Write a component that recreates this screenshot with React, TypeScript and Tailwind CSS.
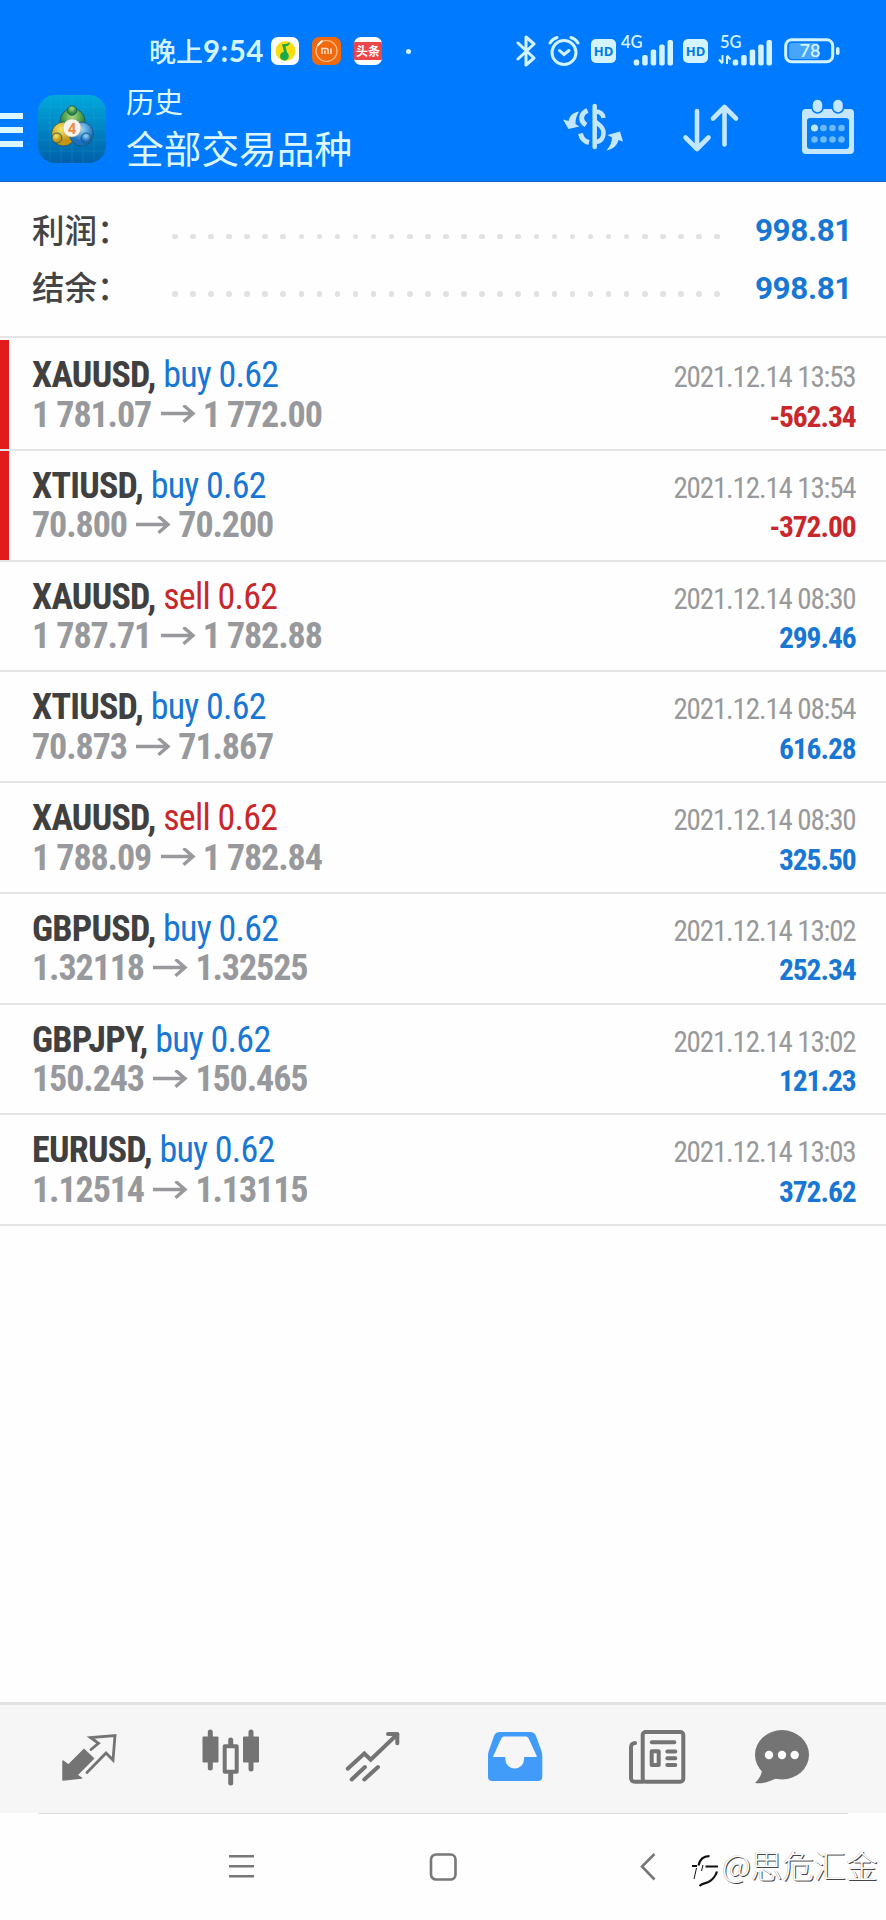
import { clsx } from "clsx";
import type { ReactNode } from "react";

type Deal = {
  symbol: string;
  side: "buy" | "sell";
  volume: string;
  open: string;
  close: string;
  time: string;
  profit: string;
  // stopped-out deals get a red stripe on the left edge
  flagged?: boolean;
};

const DEALS: Deal[] = [
  { symbol: "XAUUSD", side: "buy", volume: "0.62", open: "1 781.07", close: "1 772.00", time: "2021.12.14 13:53", profit: "-562.34", flagged: true },
  { symbol: "XTIUSD", side: "buy", volume: "0.62", open: "70.800", close: "70.200", time: "2021.12.14 13:54", profit: "-372.00", flagged: true },
  { symbol: "XAUUSD", side: "sell", volume: "0.62", open: "1 787.71", close: "1 782.88", time: "2021.12.14 08:30", profit: "299.46" },
  { symbol: "XTIUSD", side: "buy", volume: "0.62", open: "70.873", close: "71.867", time: "2021.12.14 08:54", profit: "616.28" },
  { symbol: "XAUUSD", side: "sell", volume: "0.62", open: "1 788.09", close: "1 782.84", time: "2021.12.14 08:30", profit: "325.50" },
  { symbol: "GBPUSD", side: "buy", volume: "0.62", open: "1.32118", close: "1.32525", time: "2021.12.14 13:02", profit: "252.34" },
  { symbol: "GBPJPY", side: "buy", volume: "0.62", open: "150.243", close: "150.465", time: "2021.12.14 13:02", profit: "121.23" },
  { symbol: "EURUSD", side: "buy", volume: "0.62", open: "1.12514", close: "1.13115", time: "2021.12.14 13:03", profit: "372.62" },
];

function HdBadge() {
  return (
    <span className="flex h-6 w-[25px] items-center justify-center rounded-[5px] bg-[#d3f4ff] font-['Open_Sans'] text-[13px] font-bold leading-none text-[#0078e8]">
      HD
    </span>
  );
}

function Signal({ label, data }: { label: string; data?: boolean }) {
  return (
    <svg className="overflow-visible" width={data ? 55 : 52} height="32" fill="#d3f4ff">
      <text x={data ? 3 : 0} y="13" fontSize="16.500" fontFamily="Lato, sans-serif" fontWeight="600">
        {label}
      </text>
      {data && (
        <path d="M5.500 20v8M5.500 28.500l-3.500-4M10 29v-8M10 20.500l3.500 4" stroke="#d3f4ff" strokeWidth="2" fill="none" />
      )}
      <g transform={data ? "translate(-.8 0)" : "translate(-3.8 0)"}>
        <rect x="16.500" y="24.500" width="5.500" height="6" rx="2" />
        <rect x="25" y="20" width="5.500" height="10.500" rx="2" />
        <rect x="33.500" y="14.500" width="5.500" height="16" rx="2" />
        <rect x="42" y="9.500" width="5.500" height="21" rx="2" />
        <rect x="50.300" y="5" width="5.500" height="25.500" rx="2" />
      </g>
    </svg>
  );
}

function StatusBar() {
  return (
    <div className="flex h-[82px] items-center pt-5 text-[#d3f4ff]">
      <div className="ml-[149px] flex h-8 w-[115px] items-center whitespace-nowrap font-['Noto_Sans_CJK_SC'] text-[27px] font-medium leading-8">
        <span>晚上</span>
        <span className="font-['Lato'] text-[29.500px] font-bold tracking-[0.500px]">9:54</span>
      </div>
      <svg className="ml-[7px]" width="28" height="28" viewBox="0 0 28 28">
        <rect width="28" height="28" rx="7" fill="#fff" />
        <circle cx="14.500" cy="14" r="10" fill="#fbdc10" />
        <path d="M11 7c3 .5 5 0 8-2-.5 3-2 4-4.500 4.200l1.500 6.300a4.400 4.400 0 1 1-3-.8z" fill="#18a94a" />
      </svg>
      <svg className="ml-[13px]" width="29" height="28" viewBox="0 0 29 28">
        <rect width="29" height="28" rx="7" fill="#f0690f" />
        <circle cx="14.500" cy="14" r="10.500" fill="none" stroke="#ffbd85" strokeWidth="1.200" />
        <path d="M6 8l4-4" stroke="#fff" strokeWidth="1.800" strokeLinecap="round" />
        <path d="M10 17v-5.500h4.500a1.500 1.500 0 0 1 1.500 1.500v4M13 13.500V17M19 11.500V17" stroke="#ffe6d0" strokeWidth="1.500" fill="none" />
      </svg>
      <span className="ml-[13px] flex h-7 w-[28px] items-center justify-center overflow-hidden rounded-[7px] bg-white">
        <span className="flex h-[18px] w-full items-center justify-center whitespace-nowrap bg-[#ee4548] font-['Noto_Sans_CJK_SC'] text-[12px] font-bold leading-none text-white">
          头条
        </span>
      </span>
      <span className="ml-[24px] size-[5px] rounded-full bg-[#d3f4ff]" />

      <svg className="ml-[105px]" width="20" height="32" viewBox="0 0 20 32" fill="none" stroke="#d3f4ff" strokeWidth="3" strokeLinejoin="round" strokeLinecap="round">
        <path d="M2 8l16 15-8 7V2l8 7L2 24" />
      </svg>
      <svg className="ml-3" width="32" height="32" viewBox="0 0 32 32" fill="none" stroke="#d3f4ff" strokeWidth="3" strokeLinecap="round">
        <circle cx="16" cy="17.500" r="12" />
        <path d="M11.500 15.500l4.500 4 5-4" />
        <path d="M2 8a13 13 0 0 1 7-5.500M30 8a13 13 0 0 0-7-5.500" />
      </svg>
      <span className="ml-[11px]">
        <HdBadge />
      </span>
      <span className="ml-[5px]">
        <Signal label="4G" />
      </span>
      <span className="ml-[10px]">
        <HdBadge />
      </span>
      <span className="ml-[9px]">
        <Signal label="5G" data />
      </span>
      <svg className="ml-[12px]" width="56" height="26" viewBox="0 0 56 26">
        <rect x="5" y="5" width="30" height="16" rx="3" fill="#47a5fb" />
        <rect x="1.700" y="1.700" width="47" height="22" rx="6" fill="none" stroke="#d3f4ff" strokeWidth="3" />
        <rect x="52" y="9" width="3.500" height="8" rx="1.700" fill="#d3f4ff" />
        <text x="15.500" y="19" fontSize="18" fontFamily="Lato, sans-serif" fontWeight="600" fill="#d3f4ff">
          78
        </text>
      </svg>
    </div>
  );
}

function AppLogo() {
  return (
    <svg width="68" height="68" viewBox="0 0 68 68">
      <defs>
        <linearGradient id="tile" x1="0" y1="0" x2="0" y2="1">
          <stop offset="0" stopColor="#00a9dc" />
          <stop offset="1" stopColor="#005fa8" />
        </linearGradient>
        <radialGradient id="green" cx="50%" cy="30%">
          <stop offset="0" stopColor="#a8dc78" />
          <stop offset="1" stopColor="#2c8540" />
        </radialGradient>
        <radialGradient id="yellow" cx="40%" cy="30%">
          <stop offset="0" stopColor="#f3e568" />
          <stop offset="1" stopColor="#c49414" />
        </radialGradient>
        <radialGradient id="blue" cx="50%" cy="30%">
          <stop offset="0" stopColor="#9ad8fa" />
          <stop offset="1" stopColor="#1c6fc0" />
        </radialGradient>
      </defs>
      <rect width="68" height="68" rx="17" fill="url(#tile)" />
      <path d="M12 0v68M23 0v68M34 0v68M45 0v68M56 0v68M0 12h68M0 23h68M0 34h68M0 45h68M0 56h68" stroke="#35bde0" strokeWidth=".6" opacity=".3" />
      <g stroke="#14566b" strokeWidth=".8">
        <circle cx="34.500" cy="26" r="12.500" fill="url(#green)" />
        <circle cx="25.500" cy="39" r="12" fill="url(#yellow)" />
        <circle cx="43.500" cy="39" r="12" fill="url(#blue)" />
        <circle cx="34" cy="15.500" r="4.800" fill="url(#green)" />
        <circle cx="19" cy="43" r="5" fill="url(#yellow)" />
        <circle cx="48" cy="43" r="5" fill="url(#blue)" />
      </g>
      <circle cx="34" cy="33" r="9" fill="#f6f4ef" stroke="#c9b9a0" strokeWidth=".6" />
      <text x="34" y="38.500" textAnchor="middle" fontSize="15" fontFamily="Roboto, sans-serif" fontWeight="700" fill="#ee8a45">
        4
      </text>
    </svg>
  );
}

function Toolbar() {
  return (
    <div className="flex h-[100px] font-['Noto_Sans_CJK_SC'] text-[#dcf8ff]">
      <div className="mt-[31px] flex w-[23px] flex-col gap-[8px]">
        <span className="h-[6px] bg-[#dcf8ff]" />
        <span className="h-[6px] bg-[#dcf8ff]" />
        <span className="h-[6px] bg-[#dcf8ff]" />
      </div>
      <div className="ml-[15px] mt-[13px]">
        <AppLogo />
      </div>
      <div className="ml-[20px] w-[436px] pt-px">
        <p className="text-[28.500px] leading-[36px]">历史</p>
        <h1 className="text-[37.700px] font-normal leading-[55px]">全部交易品种</h1>
      </div>
      <svg className="mt-[18px]" width="64" height="54" viewBox="0 0 64 54" fill="none" stroke="#c2e7ff">
        <path d="M32.700 6v41" strokeLinecap="round" strokeWidth="4.500" />
        <path d="M25.500 10.500c-7 3-8 10-1.500 14.500M18.500 33.500c1 5 4 8 8.500 9" strokeWidth="5" />
        <path d="M33 11.500c5 0 8 2 8.500 6.500M33 21c3 4 8.500 5 8.500 11.500 0 6-3 9.500-8.500 9.500" strokeWidth="4.500" />
        <path d="M17 11.500c-6 1-9 4-10.500 9.500l-5.500-1.500 5.500 9.500 11-2.500-4-2.500c0-5 1-8 3.500-12.500z" fill="#c2e7ff" stroke="none" />
        <path d="M44.500 50.500c7-1.500 10.500-5 12-10.500l4.500 1.500-3-10-12.500 3.500 4.500 2.500c0 5-2 8.500-5.500 13z" fill="#c2e7ff" stroke="none" />
      </svg>
      <svg className="ml-[56px] mt-[18px]" width="60" height="54" viewBox="0 0 60 54" fill="none" stroke="#c2e7ff" strokeWidth="4.600" strokeLinecap="round" strokeLinejoin="round">
        <path d="M15 11v38M3.500 37.500L15 49l11.500-11.500M42.500 44.500V7M31 18.500L42.500 7 54 18.500" />
      </svg>
      <svg className="ml-[59px] mt-[17px]" width="54" height="56" viewBox="0 0 54 56">
        <path d="M5 10h44a4 4 0 0 1 4 4v37a4 4 0 0 1-4 4H5a4 4 0 0 1-4-4V14a4 4 0 0 1 4-4z" fill="#c2e7ff" />
        <rect x="6" y="19" width="42" height="31" rx="3" fill="#047cf5" />
        <rect x="11" y="0" width="11" height="14" rx="5.500" fill="#c2e7ff" stroke="#007aff" strokeWidth="1.500" />
        <rect x="31.500" y="0" width="11" height="14" rx="5.500" fill="#c2e7ff" stroke="#007aff" strokeWidth="1.500" />
        <g fill="#6cb9fb">
          <circle cx="13.500" cy="29" r="3.500" fill="#c2e7ff" />
          <circle cx="22.500" cy="29" r="3.300" />
          <circle cx="31.500" cy="29" r="3.300" />
          <circle cx="40.500" cy="29" r="3.300" />
          <circle cx="13.500" cy="40.500" r="3.300" />
          <circle cx="22.500" cy="40.500" r="3.300" />
          <circle cx="31.500" cy="40.500" r="3.300" />
          <circle cx="40.500" cy="40.500" r="3.300" />
        </g>
      </svg>
    </div>
  );
}

function SummaryRow({ label, value }: { label: string; value: string }) {
  return (
    <div className="flex h-[57.500px] items-center pl-[32px] pr-[34px]">
      <span className="mt-[-4px] w-[140px] whitespace-nowrap font-['Noto_Sans_CJK_SC'] text-[32.500px] font-medium leading-[56px] text-[#444]">
        {label}
      </span>
      <span className="mt-[11px] flex w-[548px] justify-between">
        {Array.from({ length: 31 }).map((_, i) => (
          <span key={i} className="size-[5.500px] rounded-full bg-[#e0e1e3]" />
        ))}
      </span>
      <span className="ml-auto font-['Roboto'] text-[31.500px] font-bold tracking-[-0.400px] text-[#1877d4]">{value}</span>
    </div>
  );
}

function DealRow({ deal }: { deal: Deal }) {
  const loss = deal.profit.startsWith("-");
  return (
    <li className="flex h-[110.750px] border-b-2 border-[#e3e4e5] font-['Roboto_Condensed','Roboto'] [font-stretch:75%]">
      <span className={clsx("w-[9px]", deal.flagged && "bg-[#e21c1c]")} />
      <div className="flex flex-1 justify-between whitespace-nowrap pl-[23px] pr-[30.500px] pt-[16px]">
        <div className="text-[36px] leading-[39.500px]">
          <p className="tracking-[-0.750px] text-[#1877d4]">
            <span className="font-bold text-[#404040]">{deal.symbol},</span>{" "}
            <span className={clsx(deal.side === "sell" && "text-[#c8282c]")}>
              {deal.side} {deal.volume}
            </span>
          </p>
          <p className="flex items-center font-bold tracking-[-1.100px] text-[#98999c]">
            {deal.open}
            <svg className="ml-[9.500px] mr-[7px]" width="35" height="20" viewBox="0 0 35 20" fill="none" stroke="#98999c" strokeWidth="3.400">
              <path d="M0 8.500h32M22.500 .3L32 8.500l-9.500 8.200" />
            </svg>
            {deal.close}
          </p>
        </div>
        <div className="pt-[2px] text-right">
          <p className="text-[29px] leading-[39.500px] tracking-[-1.150px] text-[#999]">{deal.time}</p>
          <p className={clsx("text-[29.500px] font-bold leading-[39.500px] tracking-[-1.100px]", loss ? "text-[#c8282c]" : "text-[#1877d4]")}>
            {deal.profit}
          </p>
        </div>
      </div>
    </li>
  );
}

function TabIcon({ children }: { children: ReactNode }) {
  return (
    <svg width="60" height="61" viewBox="0 0 60 61" fill="none" stroke="#747474" strokeWidth="4" strokeLinecap="round" strokeLinejoin="round">
      {children}
    </svg>
  );
}

function TabBar() {
  return (
    <nav className="flex h-[111px] border-t-[3px] border-[#e2e2e2] bg-[#f6f6f6] pl-[59px] pt-[20px]">
      <div className="flex gap-[82px]">
        <TabIcon>
          <path d="M4 36l5.500 4L25 24.500l9.500 9L18 50l4.500 3L4 55z" fill="#747474" strokeWidth="1.500" />
          <path d="M32 24.500l7.500-6.200-8-5.800L56 10.500 54 35l-7-7-19 19.500" strokeWidth="2.800" strokeLinejoin="miter" />
        </TabIcon>
        <TabIcon>
          <path d="M9.300 7v36M50 7v37" strokeWidth="5" />
          <path d="M29.700 15v5M29.700 49v9" strokeWidth="5" />
          <rect x="2.500" y="12.500" width="14" height="24" fill="#747474" strokeWidth="2" />
          <rect x="43" y="12.500" width="14" height="24" fill="#747474" strokeWidth="2" />
          <rect x="23.700" y="21.300" width="12" height="25.500" />
        </TabIcon>
        <TabIcon>
          <path d="M4.700 43.700L21.300 28.500l6.400 6.200L54.300 9.300" strokeLinejoin="miter" />
          <path d="M45 9h9.300v9.300M8.700 54.500L22 42M21.300 54.500L35 42" />
        </TabIcon>
        <TabIcon>
          <path
            d="M15 7h30c3 0 5 1.500 6 4l5.500 15c.6 2 .8 3.500.8 6v20c0 2.500-1.500 4-4 4H7c-2.500 0-4-1.500-4-4V32c0-2.500.2-4 .8-6L9 11c1-2.500 3-4 6-4zM20 11.500c-2 0-3 .5-3.800 2.300L8.300 31c-.3.700 0 1 .7 1h11.300v2a9.400 9.400 0 0 0 18.800 0v-2H51c.7 0 1-.3.700-1l-7.900-17.200c-.8-1.800-1.800-2.300-3.800-2.300z"
            fill="#419cf9"
            fillRule="evenodd"
            stroke="none"
          />
        </TabIcon>
        <TabIcon>
          <rect x="15.700" y="7" width="40.600" height="49.700" rx="3" />
          <path d="M8 18c-3 .5-4 1.500-4 4.500v30c0 3 1 4.200 4 4.200h8" />
          <path d="M24.800 17.200h22.500" />
          <rect x="24.700" y="26.300" width="7" height="13.700" />
          <path d="M40.300 26.500h8M40.300 33.200h8M40.300 40h8" />
        </TabIcon>
      </div>
      <div className="ml-[65px]">
        <TabIcon>
          <g fill="#747474" stroke="none">
            <ellipse cx="30" cy="29.700" rx="27" ry="24.700" />
            <path d="M9.500 42c1.500 6-1.500 11-6.500 16 7 1 14-1 22-5z" />
          </g>
          <g fill="#fff" stroke="none">
            <circle cx="17" cy="30" r="4.200" />
            <circle cx="30" cy="30" r="4.200" />
            <circle cx="42.700" cy="30" r="4.200" />
          </g>
        </TabIcon>
      </div>
    </nav>
  );
}

function SystemNav() {
  return (
    <div className="flex flex-1 flex-col bg-[#fefefe]">
      <div className="mx-[38px] h-px bg-[#dedede]" />
      <div className="flex pt-[38px]">
        <svg className="ml-[228px]" width="28" height="30" viewBox="0 0 28 30" stroke="#777" strokeWidth="2.400">
          <path d="M1 4.300h25M1 14.300h25M1 24.300h25" />
        </svg>
        <svg className="ml-[173px]" width="28" height="30" viewBox="0 0 28 30" fill="none" stroke="#777" strokeWidth="2.600">
          <rect x="2" y="2.500" width="24.500" height="25" rx="5" />
        </svg>
        <svg className="ml-[182px]" width="18" height="30" viewBox="0 0 18 30" fill="none" stroke="#777" strokeWidth="2.600">
          <path d="M15.500 2L3 14.500 15.500 27.500" />
        </svg>
        <svg className="ml-[35px] mt-[2px]" width="28" height="35" viewBox="0 0 28 35" fill="none" stroke="#111">
          <path d="M17.500 2.200C11 2 8 5 6.500 11.500M0 12h5M13.500 12.500h12.500M7.500 32c3-3 6-2.500 9-4 4-2 7-6 8.500-10.500" strokeWidth="2.200" />
          <path d="M4.500 14L2 25M11 11l-1.500 6" strokeWidth="1" />
        </svg>
        <span className="ml-[2px] mt-[-11px] whitespace-nowrap font-['Noto_Sans_CJK_SC'] text-[31.700px] font-light leading-[46px] text-white [text-shadow:1px_1px_0_#444,-0.500px_-0.500px_0_#bbb]">
          @思危汇金
        </span>
      </div>
    </div>
  );
}

export default function App() {
  return (
    <div className="flex h-[1920px] w-[886px] flex-col overflow-hidden bg-[#fefefe]">
      <header className="h-[182px] border-b border-[#1766cf] bg-[#007aff]">
        <StatusBar />
        <Toolbar />
      </header>
      <main className="h-[1520px]">
        <section className="h-[156px] border-b-2 border-[#e3e4e5] pt-[20px]">
          <SummaryRow label="利润：" value="998.81" />
          <SummaryRow label="结余：" value="998.81" />
        </section>
        <ul className="mt-[2px]">
          {DEALS.map((deal, i) => (
            <DealRow key={i} deal={deal} />
          ))}
        </ul>
      </main>
      <TabBar />
      <SystemNav />
    </div>
  );
}
